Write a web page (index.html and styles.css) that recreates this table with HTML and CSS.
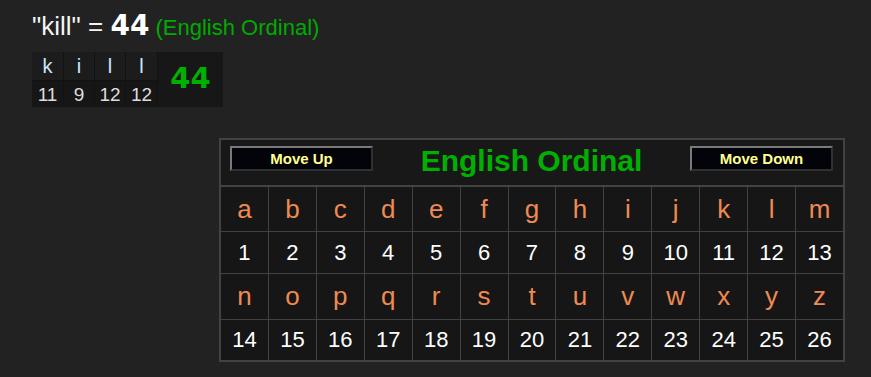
FILE: index.html
```html
<!DOCTYPE html>
<html lang="en">
<head>
<meta charset="utf-8">
<title>kill - English Ordinal</title>
<link rel="stylesheet" href="styles.css">
</head>
<body>
<div class="page">
  <div class="title"><span class="word">"kill" = </span><span class="sum">44</span><span class="cipher-name"> (English Ordinal)</span></div>

  <div class="breakdown">
    <div class="b-letter">k</div>
    <div class="b-letter">i</div>
    <div class="b-letter">l</div>
    <div class="b-letter">l</div>
    <div class="b-total">44</div>
    <div class="b-num">11</div>
    <div class="b-num">9</div>
    <div class="b-num">12</div>
    <div class="b-num">12</div>
  </div>

  <div class="chart">
    <div class="chart-head">
      <button class="nav">Move Up</button>
      <h2 class="chart-title">English Ordinal</h2>
      <button class="nav">Move Down</button>
    </div>
    <div class="grid">
      <div class="c l">a</div><div class="c l">b</div><div class="c l">c</div><div class="c l">d</div><div class="c l">e</div><div class="c l">f</div><div class="c l">g</div><div class="c l">h</div><div class="c l">i</div><div class="c l">j</div><div class="c l">k</div><div class="c l">l</div><div class="c l">m</div>
      <div class="c n">1</div><div class="c n">2</div><div class="c n">3</div><div class="c n">4</div><div class="c n">5</div><div class="c n">6</div><div class="c n">7</div><div class="c n">8</div><div class="c n">9</div><div class="c n">10</div><div class="c n">11</div><div class="c n">12</div><div class="c n">13</div>
      <div class="c l">n</div><div class="c l">o</div><div class="c l">p</div><div class="c l">q</div><div class="c l">r</div><div class="c l">s</div><div class="c l">t</div><div class="c l">u</div><div class="c l">v</div><div class="c l">w</div><div class="c l">x</div><div class="c l">y</div><div class="c l">z</div>
      <div class="c n">14</div><div class="c n">15</div><div class="c n">16</div><div class="c n">17</div><div class="c n">18</div><div class="c n">19</div><div class="c n">20</div><div class="c n">21</div><div class="c n">22</div><div class="c n">23</div><div class="c n">24</div><div class="c n">25</div><div class="c n">26</div>
    </div>
  </div>
</div>
</body>
</html>
```

FILE: styles.css
```css
html, body {
  margin: 0;
  padding: 0;
  background: #222222;
}

body {
  font-family: "Liberation Sans", Arial, sans-serif;
  color: #ffffff;
}

.page {
  padding: 6px 0 0 32px;
}

.title {
  height: 40px;
  line-height: 40px;
  font-size: 26px;
  white-space: nowrap;
}

.word {
  color: #f4f4f4;
}

.sum {
  font-family: "DejaVu Sans", Verdana, sans-serif;
  font-weight: bold;
  font-size: 28px;
  color: #ffffff;
}

.cipher-name {
  font-size: 22px;
  color: #00aa00;
}

.breakdown {
  margin-top: 6px;
  display: inline-grid;
  grid-template-columns: 31px 30px 30px 31px 65px;
  grid-template-rows: 28px 26px;
  gap: 1px;
  background: #121212;
}

.b-letter {
  background: #1c1c1c;
  color: #cfe6fb;
  font-size: 20px;
  display: flex;
  align-items: center;
  justify-content: center;
}

.b-num {
  background: #161616;
  color: #dddddd;
  font-size: 19px;
  display: flex;
  align-items: center;
  justify-content: center;
  padding-top: 2px;
}

.b-total {
  grid-column: 5;
  grid-row: 1 / span 2;
  background: #171717;
  color: #00b000;
  font-family: "DejaVu Sans", Verdana, sans-serif;
  font-weight: bold;
  font-size: 29px;
  display: flex;
  align-items: center;
  justify-content: center;
  padding-bottom: 4px;
}

.chart {
  margin: 31px 0 0 187px;
  width: 622px;
  border: 2px solid #424242;
  background: #424242;
}

.chart-head {
  height: 45px;
  background: #181818;
  display: flex;
  justify-content: space-between;
  align-items: flex-start;
  padding: 0 10px 0 9px;
  border-bottom: 1px solid #424242;
}

.nav {
  margin-top: 6px;
  width: 143px;
  height: 25px;
  padding: 0;
  background: #03030a;
  border: 2px solid;
  border-color: #7a7a7a #303030 #303030 #7a7a7a;
  color: #ffff90;
  font-family: "Liberation Sans", Arial, sans-serif;
  font-weight: bold;
  font-size: 15px;
  line-height: 19px;
}

.chart-title {
  margin: 4px 0 0 0;
  font-size: 30px;
  line-height: 34px;
  font-weight: bold;
  color: #00b000;
}

.grid {
  margin-top: 1px;
  display: grid;
  grid-template-columns: repeat(13, 1fr);
  grid-template-rows: 44px 41px 45px 40px;
  gap: 1px;
}

.c {
  background: #161616;
  display: flex;
  align-items: center;
  justify-content: center;
}

.c.l {
  color: #ef8a52;
  font-size: 26px;
}

.c.n {
  color: #ffffff;
  font-size: 22px;
}
```
